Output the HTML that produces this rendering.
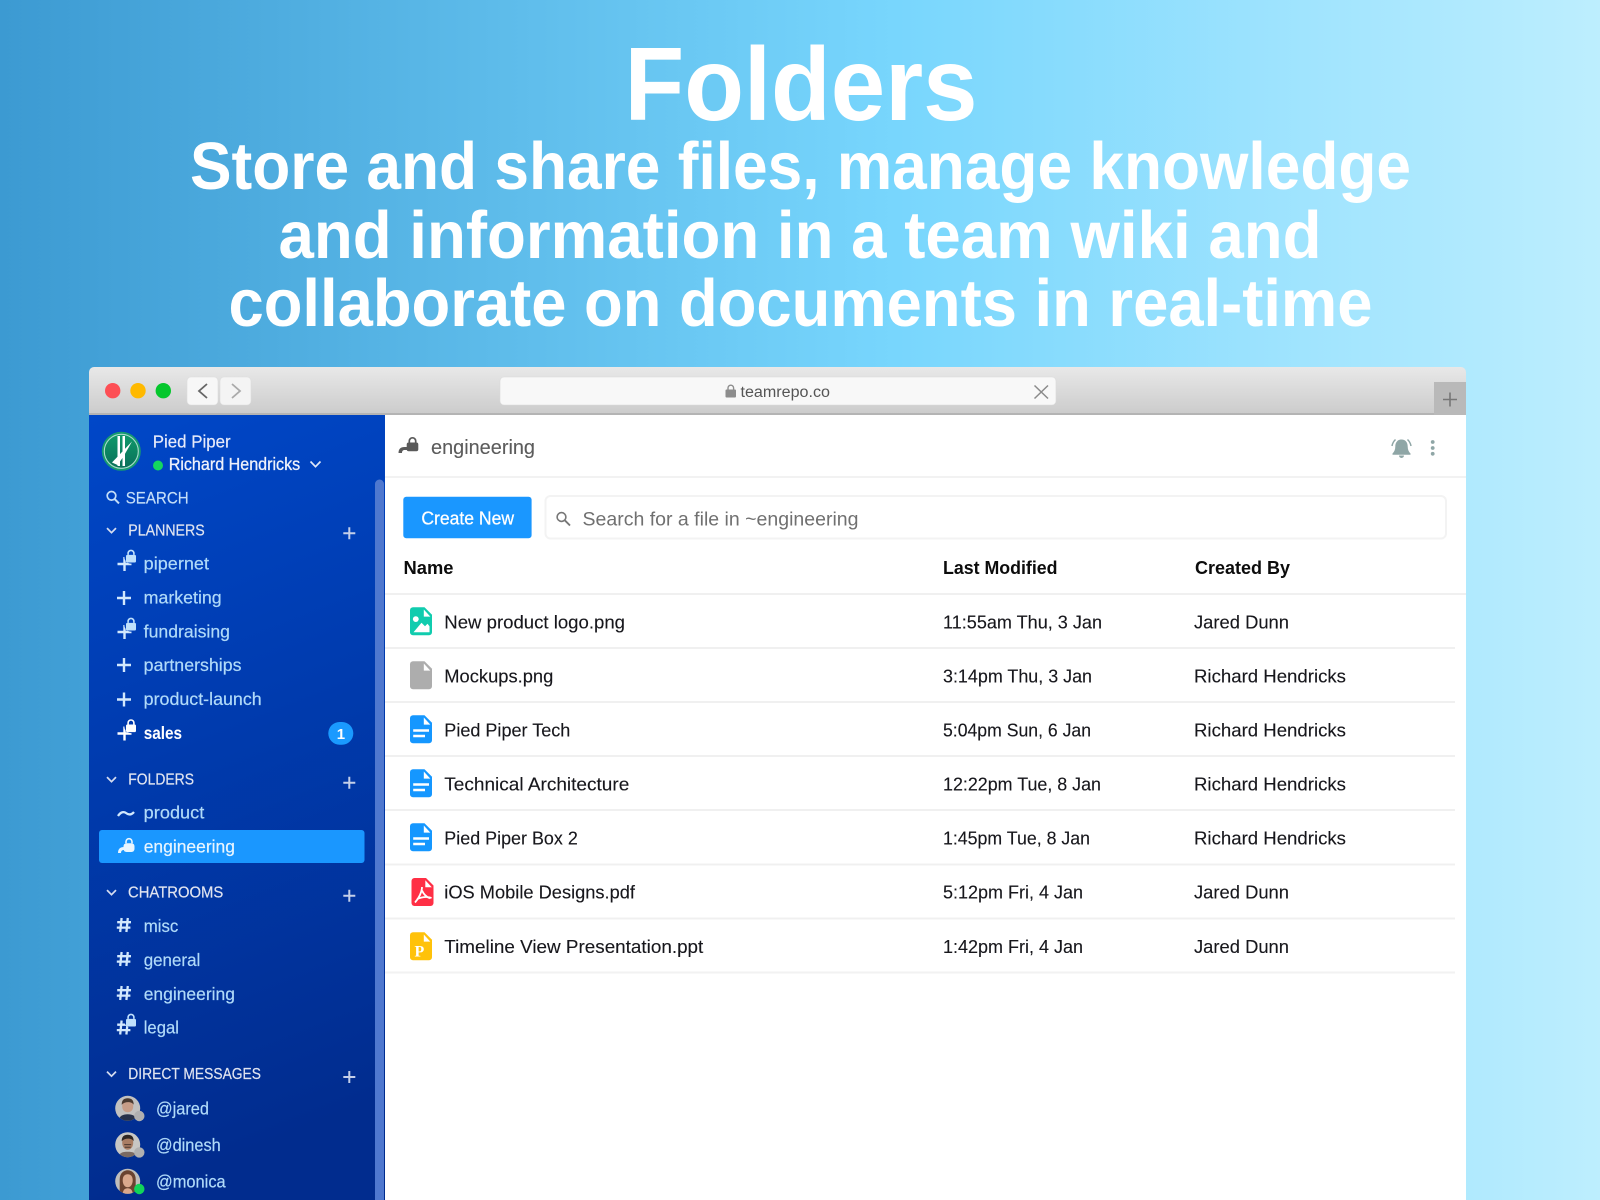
<!DOCTYPE html>
<html lang="en">
<head>
<meta charset="utf-8">
<title>Folders</title>
<style>
html,body{margin:0;padding:0;width:1600px;height:1200px;overflow:hidden;background:#6cc9f5}
svg{display:block;font-family:"Liberation Sans",sans-serif}
.h{fill:#fff;font-weight:700}
.ch{fill:#b0daf9;stroke:#b0daf9;stroke-width:.2px;font-size:17.5px}
.sec{fill:#e0e4f0;stroke:#e0e4f0;stroke-width:.2px;font-size:15.5px}
.r{fill:#17171c;stroke:#17171c;stroke-width:.12px;font-size:18px}
.th{fill:#0c0c0c;font-size:18px;font-weight:700}
.soft{filter:blur(.3px)}
</style>
</head>
<body>
<svg width="1600" height="1200" viewBox="0 0 1600 1200" xmlns="http://www.w3.org/2000/svg">
<defs>
<linearGradient id="bg" x1="0" y1="0" x2="1" y2="0">
<stop offset="0" stop-color="#3c9ad2"/><stop offset=".56" stop-color="#78d6fd"/><stop offset="1" stop-color="#bdeefe"/>
</linearGradient>
<linearGradient id="bar" x1="0" y1="0" x2="0" y2="1">
<stop offset="0" stop-color="#e8e8e8"/><stop offset="1" stop-color="#cbcbcb"/>
</linearGradient>
<linearGradient id="side" x1="0" y1="0" x2=".15" y2="1">
<stop offset="0" stop-color="#0047c8"/><stop offset="1" stop-color="#012c8e"/>
</linearGradient>
<linearGradient id="logo" x1="0" y1="0" x2="0" y2="1">
<stop offset="0" stop-color="#0f9a6a"/><stop offset="1" stop-color="#0a6f5a"/>
</linearGradient>
<clipPath id="win"><path d="M94 367H1461a5 5 0 0 1 5 5V1200H89V372a5 5 0 0 1 5-5z"/></clipPath>
<clipPath id="av"><circle cx="0" cy="0" r="12.5"/></clipPath>
<g id="plus"><path d="M-7 0H7M0-7V7" fill="none" stroke="#d2e8fd" stroke-width="2.400"/></g>
<g id="lock"><rect x="-5" y="-2.600" width="10" height="7.600" rx="1.400" fill="#bfe0fc"/><path d="M-2.900-2.600V-4.200a2.900 2.900 0 0 1 5.800 0v1.600" fill="none" stroke="#bfe0fc" stroke-width="1.600"/></g>
<g id="chev"><path d="M-4.500-2.400L0 2.200 4.500-2.400" fill="none" stroke="#d5dcf0" stroke-width="1.700"/></g>
<g id="splus"><path d="M-6 0H6M0-6V6" fill="none" stroke="#c4cfe9" stroke-width="2"/></g>
<g id="hash"><path d="M-2.400-7L-3.800 7M3.800-7L2.400 7M-6.800-2.800H7M-7.200 2.600H6.400" fill="none" stroke="#d2e8fd" stroke-width="2.300"/></g>
<path id="file" d="M3 0H14.500L22 7.500V25a3 3 0 0 1-3 3H3a3 3 0 0 1-3-3V3a3 3 0 0 1 3-3z"/>
<path id="ear" d="M13.800 2.200L20.300 9.300H13.800z" fill="#fff"/>
<g id="doc"><use href="#file" fill="#1597ff"/><use href="#ear"/><path d="M3.200 15.200H19M3.200 20.700H15" stroke="#fff" stroke-width="2.500" fill="none"/></g>
</defs>

<rect width="1600" height="1200" fill="url(#bg)"/>

<text class="h" x="624.500" y="120" font-size="104" textLength="353" lengthAdjust="spacingAndGlyphs">Folders</text>
<text class="h" x="190" y="189" font-size="67" textLength="1221" lengthAdjust="spacingAndGlyphs">Store and share files, manage knowledge</text>
<text class="h" x="278.500" y="258" font-size="67" textLength="1043" lengthAdjust="spacingAndGlyphs">and information in a team wiki and</text>
<text class="h" x="228.500" y="326" font-size="67" textLength="1144" lengthAdjust="spacingAndGlyphs">collaborate on documents in real-time</text>

<g clip-path="url(#win)"><g class="soft">
<rect x="89" y="367" width="1377" height="833" fill="#fff"/>
<rect x="89" y="367" width="1377" height="48" fill="url(#bar)"/>
<rect x="89" y="413" width="1377" height="2" fill="#b4b4b4"/>
<rect x="1434" y="382" width="32" height="33" fill="#b9b9b9"/>
<path d="M1443 399.500H1457M1450 392.500V406.500" stroke="#767676" stroke-width="1.600" fill="none"/>

<circle cx="112.700" cy="390.700" r="7.700" fill="#fd4f55"/>
<circle cx="138" cy="390.700" r="7.700" fill="#ffb900"/>
<circle cx="163.300" cy="390.700" r="7.700" fill="#05c72d"/>

<rect x="187" y="377" width="31" height="28" rx="4" fill="#f7f7f7" stroke="#dcdcdc" stroke-width=".6"/>
<rect x="220" y="377" width="31" height="28" rx="4" fill="#f4f4f4" stroke="#dcdcdc" stroke-width=".6"/>
<path d="M207 384L199 391 207 398" fill="none" stroke="#666" stroke-width="1.800"/>
<path d="M232 384L240 391 232 398" fill="none" stroke="#aaa" stroke-width="1.800"/>

<rect x="500" y="377" width="556" height="28" rx="4" fill="#f8f8f8" stroke="#dadada" stroke-width=".6"/>
<rect x="725.500" y="389.500" width="10.500" height="8" rx="1" fill="#8d8d8d"/>
<path d="M728 389.500V388a2.800 2.800 0 0 1 5.600 0v1.500" fill="none" stroke="#8d8d8d" stroke-width="1.400"/>
<text x="740.500" y="397" font-size="15.500" fill="#555" textLength="89.500" lengthAdjust="spacingAndGlyphs">teamrepo.co</text>
<path d="M1034.500 385.500L1048 398.500M1048 385.500L1034.500 398.500" stroke="#8a8a8a" stroke-width="1.500" fill="none"/>

<!-- sidebar -->
<rect x="89" y="415" width="296" height="785" fill="url(#side)"/>
<path d="M375 484a4.500 4.500 0 0 1 9 0V1200H375z" fill="#4f78cf"/>

<circle cx="121.300" cy="451.300" r="19.500" fill="#169a70"/>
<circle cx="121.300" cy="451.300" r="17" fill="url(#logo)" stroke="#a9dcc9" stroke-width="1.100"/>
<path d="M117.500 436H120V466H117.500zM122.500 436H125V466H122.500z" fill="#fff"/>
<path d="M112 462.500L132 441.500 123.500 456.500 117.500 465z" fill="#fff"/>

<text x="152.700" y="447.500" font-size="17.500" fill="#e6eafa" stroke="#e6eafa" stroke-width=".2" textLength="78" lengthAdjust="spacingAndGlyphs">Pied Piper</text>
<circle cx="158" cy="465.500" r="5" fill="#14d65f"/>
<text x="168.700" y="470" font-size="17.500" fill="#eef1fb" stroke="#eef1fb" stroke-width=".3" textLength="131.500" lengthAdjust="spacingAndGlyphs">Richard Hendricks</text>
<path d="M310.500 461.500L315.500 466.700 320.500 461.500" fill="none" stroke="#dfe7f8" stroke-width="1.700"/>

<circle cx="111.500" cy="495.800" r="4.300" fill="none" stroke="#c4def8" stroke-width="1.700"/>
<path d="M114.600 499L119 503.400" stroke="#c4def8" stroke-width="2"/>
<text x="125.700" y="503.500" font-size="17" fill="#c4def8" stroke="#c4def8" stroke-width=".2" textLength="63" lengthAdjust="spacingAndGlyphs">SEARCH</text>

<use href="#chev" x="111.500" y="530.500"/>
<text class="sec" x="128.300" y="535.500" textLength="76.400" lengthAdjust="spacingAndGlyphs">PLANNERS</text>
<use href="#splus" x="349.300" y="533.300"/>

<use href="#plus" x="124.500" y="564"/><circle cx="131" cy="557" r="6.600" fill="#0044c2"/><use href="#lock" x="131" y="557.500"/>
<text class="ch" x="143.700" y="569.500" textLength="65.300" lengthAdjust="spacingAndGlyphs">pipernet</text>
<use href="#plus" x="124" y="598"/>
<text class="ch" x="143.700" y="603.500" textLength="78" lengthAdjust="spacingAndGlyphs">marketing</text>
<use href="#plus" x="124.500" y="632"/><circle cx="131" cy="625" r="6.600" fill="#0042be"/><use href="#lock" x="131" y="625.500"/>
<text class="ch" x="143.700" y="637.500" textLength="86.300" lengthAdjust="spacingAndGlyphs">fundraising</text>
<use href="#plus" x="124" y="665"/>
<text class="ch" x="143.700" y="671" textLength="97.800" lengthAdjust="spacingAndGlyphs">partnerships</text>
<use href="#plus" x="124" y="699.500"/>
<text class="ch" x="143.700" y="705" textLength="118" lengthAdjust="spacingAndGlyphs">product-launch</text>
<path d="M117.500 733.500H131.500M124.500 726.500V740.500" fill="none" stroke="#fff" stroke-width="2.400"/><circle cx="131" cy="726.500" r="6.600" fill="#0039ae"/><rect x="126" y="724.500" width="10" height="7.600" rx="1.400" fill="#fff"/><path d="M128.100 724.500V722.900a2.900 2.900 0 0 1 5.800 0v1.600" fill="none" stroke="#fff" stroke-width="1.600"/>
<text x="143.700" y="739" font-size="17.500" font-weight="700" fill="#fff" textLength="38.300" lengthAdjust="spacingAndGlyphs">sales</text>
<rect x="328.300" y="722" width="25" height="22.700" rx="11.300" fill="#1a9aff"/>
<text x="336.800" y="739" font-size="15" font-weight="700" fill="#fff">1</text>

<use href="#chev" x="111.500" y="779.500"/>
<text class="sec" x="128.300" y="784.500" textLength="65.700" lengthAdjust="spacingAndGlyphs">FOLDERS</text>
<use href="#splus" x="349.300" y="782.700"/>
<path d="M118 816c3-4.500 6-4.500 8-3s5 2.500 8-1" fill="none" stroke="#d2e8fd" stroke-width="2.300"/>
<text class="ch" x="143.700" y="818.700" textLength="60.600" lengthAdjust="spacingAndGlyphs">product</text>

<rect x="99" y="830" width="265.500" height="33" rx="3" fill="#1a97ff"/>
<path d="M118 853c0-4 2-6 6-6h5v3h-5c-2 0-3 1-3 3z" fill="#eaf6ff"/>
<g transform="translate(129 846)"><rect x="-5.500" y="-2.800" width="11" height="8.800" rx="3" fill="#eaf6ff"/><path d="M-3-2.800V-4.300a3 3 0 0 1 6 0v1.500" fill="none" stroke="#eaf6ff" stroke-width="1.600"/></g>
<text x="143.700" y="852.700" font-size="17.500" fill="#e8f5ff" stroke="#e8f5ff" stroke-width=".2" textLength="91.300" lengthAdjust="spacingAndGlyphs">engineering</text>

<use href="#chev" x="111.500" y="892.500"/>
<text class="sec" x="128" y="897.500" textLength="95.300" lengthAdjust="spacingAndGlyphs">CHATROOMS</text>
<use href="#splus" x="349.300" y="895.700"/>

<use href="#hash" x="124" y="925"/>
<text class="ch" x="143.700" y="932" textLength="34.600" lengthAdjust="spacingAndGlyphs">misc</text>
<use href="#hash" x="124" y="959"/>
<text class="ch" x="143.700" y="966" textLength="56.600" lengthAdjust="spacingAndGlyphs">general</text>
<use href="#hash" x="124" y="993"/>
<text class="ch" x="143.700" y="1000" textLength="91.300" lengthAdjust="spacingAndGlyphs">engineering</text>
<use href="#hash" x="124" y="1027.500"/><circle cx="131" cy="1021" r="6.600" fill="#00339f"/><use href="#lock" x="131" y="1021.500"/>
<text class="ch" x="143.700" y="1033.300" textLength="35.300" lengthAdjust="spacingAndGlyphs">legal</text>

<use href="#chev" x="111.500" y="1074"/>
<text class="sec" x="128.300" y="1079" textLength="132.700" lengthAdjust="spacingAndGlyphs">DIRECT MESSAGES</text>
<use href="#splus" x="349.300" y="1077"/>

<g transform="translate(127.700 1108.300)">
<g clip-path="url(#av)"><rect x="-13" y="-13" width="26" height="26" fill="#c2c1bf"/><path d="M-5.500-2c0-5 2-7 5.500-7s5.500 2 5.500 7c0 4-2.500 6-5.500 6s-5.500-2-5.500-6z" fill="#c79d87"/><path d="M-6-3.500c0-5 2.500-6.500 6-6.500S6-8.500 6-3.500C4-7-3-7-6-3.500z" fill="#4a3a30"/><path d="M-9 13c0-5 4-7 9-7s9 2 9 7z" fill="#28324a"/></g>
<circle cx="11.600" cy="7.700" r="5.200" fill="#b0b0b0"/>
</g>
<text class="ch" x="156" y="1114.300" textLength="53" lengthAdjust="spacingAndGlyphs">@jared</text>

<g transform="translate(127.700 1144.700)">
<g clip-path="url(#av)"><rect x="-13" y="-13" width="26" height="26" fill="#c8c7c4"/><path d="M-5.500-2c0-5 2-7 5.500-7s5.500 2 5.500 7c0 4-2.500 7-5.500 7s-5.500-3-5.500-7z" fill="#a97d63"/><path d="M-6-3.500c0-5 2.500-6.500 6-6.500S6-8.500 6-3.500C4-7-3-7-6-3.500z" fill="#2e2622"/><path d="M-3.500 0H3.500M-3 2.500H3" stroke="#3a2c26" stroke-width=".9"/><path d="M-9 13c0-5 4-6 9-6s9 1 9 6z" fill="#7a6a62"/></g>
<circle cx="11.600" cy="7.700" r="5.200" fill="#b0b0b0"/>
</g>
<text class="ch" x="156" y="1151" textLength="64.700" lengthAdjust="spacingAndGlyphs">@dinesh</text>

<g transform="translate(127.700 1181.300)">
<g clip-path="url(#av)"><rect x="-13" y="-13" width="26" height="26" fill="#c0bebb"/><path d="M-8 12V-2c0-6 4-9 8-9s8 3 8 9v14z" fill="#6a4330"/><path d="M-5-1c0-4 2-6 5-6s5 2 5 6c0 4-2 7-5 7s-5-3-5-7z" fill="#d9a88c"/><path d="M-5 13c0-4 2-6 5-6s5 2 5 6z" fill="#d9a88c"/></g>
<circle cx="11.600" cy="7.700" r="5.200" fill="#12d45a"/>
</g>
<text class="ch" x="156" y="1187.700" textLength="69.700" lengthAdjust="spacingAndGlyphs">@monica</text>

<!-- header -->
<path d="M398.500 453c0-4 2-6 6-6h5v3h-5c-1.500 0-2.500 1-2.500 3z" fill="#5a5a5a"/>
<g transform="translate(412.500 445.500)"><rect x="-5.800" y="-3" width="11.600" height="8.800" rx="2" fill="#5a5a5a"/><path d="M-3.200-3V-4.500a3.200 3.200 0 0 1 6.400 0V-3" fill="none" stroke="#5a5a5a" stroke-width="1.700"/></g>
<text x="431" y="454" font-size="20" fill="#5c5c5c" stroke="#5c5c5c" stroke-width=".12" textLength="104" lengthAdjust="spacingAndGlyphs">engineering</text>

<path d="M1401.500 439.500c-4 0-6.200 3-6.200 7 0 3-1 5.200-2.800 7v1.300h18v-1.300c-1.800-1.800-2.800-4-2.800-7 0-4-2.200-7-6.200-7z" fill="#8fa6a6"/>
<path d="M1399 455.500a2.500 2.500 0 0 0 5 0z" fill="#8fa6a6"/>
<path d="M1392 446c.5-2.800 1.700-4.800 3.500-6.500M1411 446c-.5-2.800-1.700-4.800-3.500-6.500" fill="none" stroke="#8fa6a6" stroke-width="1.500"/>
<circle cx="1432.700" cy="442" r="1.900" fill="#8fa6a6"/><circle cx="1432.700" cy="448" r="1.900" fill="#8fa6a6"/><circle cx="1432.700" cy="453.800" r="1.900" fill="#8fa6a6"/>
<rect x="385" y="476" width="1081" height="2" fill="#f2f2f2"/>

<rect x="403.300" y="496.700" width="128.300" height="41.600" rx="3" fill="#1a97ff"/>
<text x="421.400" y="524.500" font-size="18" fill="#fff" stroke="#fff" stroke-width=".25" textLength="92.600" lengthAdjust="spacingAndGlyphs">Create New</text>
<rect x="545.500" y="496" width="900.500" height="42.500" rx="5" fill="#fff" stroke="#f3f3f3" stroke-width="2"/>
<circle cx="561.500" cy="517" r="4.400" fill="none" stroke="#777" stroke-width="1.600"/>
<path d="M564.800 520.300L570 525.500" stroke="#777" stroke-width="1.900"/>
<text x="582.500" y="525.500" font-size="19.500" fill="#707070" textLength="276" lengthAdjust="spacingAndGlyphs">Search for a file in ~engineering</text>

<text class="th" x="403.500" y="573.800" textLength="50" lengthAdjust="spacingAndGlyphs">Name</text>
<text class="th" x="943" y="573.800" textLength="114.500" lengthAdjust="spacingAndGlyphs">Last Modified</text>
<text class="th" x="1195" y="573.800" textLength="95" lengthAdjust="spacingAndGlyphs">Created By</text>
<rect x="385" y="593" width="1081" height="2" fill="#f0f0f0"/>
<path d="M385 648H1455M385 702H1455M385 756H1455M385 810H1455M385 864.500H1455M385 918.500H1455" stroke="#f0f0f0" stroke-width="2"/>
<rect x="385" y="971.500" width="1070" height="2" fill="#f2f2f2"/>

<!-- rows -->
<g transform="translate(410 607.300)"><use href="#file" fill="#10ccae"/><use href="#ear"/><circle cx="5.800" cy="11.800" r="2.900" fill="#fff"/><path d="M3.500 25L11.500 15.500 15 19 17.500 16.500 19.500 19V25z" fill="#fff"/></g>
<text class="r" x="444.300" y="628.500" textLength="180.700" lengthAdjust="spacingAndGlyphs">New product logo.png</text>
<text class="r" x="943" y="628.500" textLength="159" lengthAdjust="spacingAndGlyphs">11:55am Thu, 3 Jan</text>
<text class="r" x="1194" y="628.500" textLength="95" lengthAdjust="spacingAndGlyphs">Jared Dunn</text>

<g transform="translate(410 661.300)"><use href="#file" fill="#adadad"/><use href="#ear"/></g>
<text class="r" x="444.300" y="682.500" textLength="109" lengthAdjust="spacingAndGlyphs">Mockups.png</text>
<text class="r" x="943" y="682.500" textLength="149" lengthAdjust="spacingAndGlyphs">3:14pm Thu, 3 Jan</text>
<text class="r" x="1194" y="682.500" textLength="152" lengthAdjust="spacingAndGlyphs">Richard Hendricks</text>

<use href="#doc" x="410" y="715.300"/>
<text class="r" x="444.300" y="736.500" textLength="126" lengthAdjust="spacingAndGlyphs">Pied Piper Tech</text>
<text class="r" x="943" y="736.500" textLength="148" lengthAdjust="spacingAndGlyphs">5:04pm Sun, 6 Jan</text>
<text class="r" x="1194" y="736.500" textLength="152" lengthAdjust="spacingAndGlyphs">Richard Hendricks</text>

<use href="#doc" x="410" y="769.300"/>
<text class="r" x="444.300" y="790.500" textLength="185" lengthAdjust="spacingAndGlyphs">Technical Architecture</text>
<text class="r" x="943" y="790.500" textLength="158" lengthAdjust="spacingAndGlyphs">12:22pm Tue, 8 Jan</text>
<text class="r" x="1194" y="790.500" textLength="152" lengthAdjust="spacingAndGlyphs">Richard Hendricks</text>

<use href="#doc" x="410" y="823.300"/>
<text class="r" x="444.300" y="844.500" textLength="133.500" lengthAdjust="spacingAndGlyphs">Pied Piper Box 2</text>
<text class="r" x="943" y="844.500" textLength="147" lengthAdjust="spacingAndGlyphs">1:45pm Tue, 8 Jan</text>
<text class="r" x="1194" y="844.500" textLength="152" lengthAdjust="spacingAndGlyphs">Richard Hendricks</text>

<g transform="translate(411.500 878)"><use href="#file" fill="#ff2f45"/><use href="#ear"/><path d="M10.500 9c0 5-3 11-7 15.500M5.500 21c5-2 10-2.800 14.500-1M10.500 12.500c1.500 3.500 4 6.300 8 7.800" fill="none" stroke="#fff" stroke-width="1.800"/></g>
<text class="r" x="444.300" y="898.500" textLength="190.700" lengthAdjust="spacingAndGlyphs">iOS Mobile Designs.pdf</text>
<text class="r" x="943" y="898.500" textLength="140" lengthAdjust="spacingAndGlyphs">5:12pm Fri, 4 Jan</text>
<text class="r" x="1194" y="898.500" textLength="95" lengthAdjust="spacingAndGlyphs">Jared Dunn</text>

<g transform="translate(410 932.300)"><use href="#file" fill="#ffc20a"/><use href="#ear"/><text x="4.500" y="24" font-family="'Liberation Serif',serif" font-size="16" font-weight="700" fill="#fff">P</text></g>
<text class="r" x="444.300" y="953" textLength="259" lengthAdjust="spacingAndGlyphs">Timeline View Presentation.ppt</text>
<text class="r" x="943" y="953" textLength="140" lengthAdjust="spacingAndGlyphs">1:42pm Fri, 4 Jan</text>
<text class="r" x="1194" y="953" textLength="95" lengthAdjust="spacingAndGlyphs">Jared Dunn</text>
</g></g>
</svg>
</body>
</html>
